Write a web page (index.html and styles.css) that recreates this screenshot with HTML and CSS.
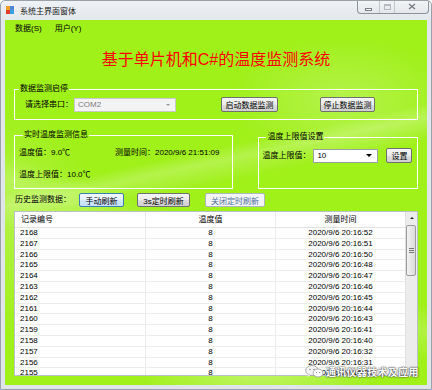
FILE: index.html
```html
<!DOCTYPE html>
<html lang="zh-CN">
<head>
    <meta charset="UTF-8">
    <title>系统主界面窗体</title>
    <link rel="stylesheet" href="styles.css">
</head>
<body>
<div class="window">
    <div class="titlebar">
        <span class="app-icon"><i class="c1"></i><i class="c2"></i><i class="c3"></i><i class="c4"></i></span>
        <span class="title">系统主界面窗体</span>
        <div class="controls">
            <span class="ctl ctl-min"><i></i></span>
            <span class="ctl ctl-max"><i></i></span>
            <span class="ctl ctl-close">
                <svg width="8" height="7" viewBox="0 0 8 7"><path d="M1 1L7 6M7 1L1 6" stroke="#7a7f86" stroke-width="1.4" fill="none"/></svg>
            </span>
        </div>
    </div>

    <div class="client">
        <div class="menu">
            <span>数据(S)</span>
            <span>用户(Y)</span>
        </div>

        <h1 class="headline">基于单片机和C#的温度监测系统</h1>

        <fieldset class="group g-start">
            <legend>数据监测启停</legend>
            <div class="row">
                <span class="lbl lbl-port">请选择串口：</span>
                <div class="combo combo-port disabled"><span>COM2</span><i class="arrow"></i></div>
                <button class="btn b-start">启动数据监测</button>
                <button class="btn b-stop">停止数据监测</button>
            </div>
        </fieldset>

        <div class="groups">
            <fieldset class="group g-live">
                <legend>实时温度监测信息</legend>
                <div class="line">
                    <span class="cur">温度值：9.0℃</span>
                    <span>测量时间：2020/9/6 21:51:09</span>
                </div>
                <div class="line">
                    <span>温度上限值：10.0℃</span>
                </div>
            </fieldset>

            <fieldset class="group g-limit">
                <legend>温度上限值设置</legend>
                <div class="row">
                    <span class="lbl lbl-limit">温度上限值：</span>
                    <div class="combo combo-limit"><span>10</span><i class="arrow"></i></div>
                    <button class="btn b-set">设置</button>
                </div>
            </fieldset>
        </div>

        <div class="history-bar">
            <span class="lbl lbl-hist">历史监测数据：</span>
            <button class="btn b-manual focus">手动刷新</button>
            <button class="btn b-timer">3s定时刷新</button>
            <button class="btn b-off" disabled>关闭定时刷新</button>
        </div>

        <div class="grid">
            <div class="grid-body">
                <div class="grid-head">
                    <span class="c-id">记录编号</span>
                    <span class="c-val">温度值</span>
                    <span class="c-time">测量时间</span>
                </div>
                <div class="grid-row"><span class="c-id">2168</span><span class="c-val">8</span><span class="c-time">2020/9/6 20:16:52</span></div>
                <div class="grid-row"><span class="c-id">2167</span><span class="c-val">8</span><span class="c-time">2020/9/6 20:16:51</span></div>
                <div class="grid-row"><span class="c-id">2166</span><span class="c-val">8</span><span class="c-time">2020/9/6 20:16:50</span></div>
                <div class="grid-row"><span class="c-id">2165</span><span class="c-val">8</span><span class="c-time">2020/9/6 20:16:48</span></div>
                <div class="grid-row"><span class="c-id">2164</span><span class="c-val">8</span><span class="c-time">2020/9/6 20:16:47</span></div>
                <div class="grid-row"><span class="c-id">2163</span><span class="c-val">8</span><span class="c-time">2020/9/6 20:16:46</span></div>
                <div class="grid-row"><span class="c-id">2162</span><span class="c-val">8</span><span class="c-time">2020/9/6 20:16:45</span></div>
                <div class="grid-row"><span class="c-id">2161</span><span class="c-val">8</span><span class="c-time">2020/9/6 20:16:44</span></div>
                <div class="grid-row"><span class="c-id">2160</span><span class="c-val">8</span><span class="c-time">2020/9/6 20:16:43</span></div>
                <div class="grid-row"><span class="c-id">2159</span><span class="c-val">8</span><span class="c-time">2020/9/6 20:16:41</span></div>
                <div class="grid-row"><span class="c-id">2158</span><span class="c-val">8</span><span class="c-time">2020/9/6 20:16:40</span></div>
                <div class="grid-row"><span class="c-id">2157</span><span class="c-val">8</span><span class="c-time">2020/9/6 20:16:32</span></div>
                <div class="grid-row"><span class="c-id">2156</span><span class="c-val">8</span><span class="c-time">2020/9/6 20:16:31</span></div>
                <div class="grid-row"><span class="c-id">2155</span><span class="c-val">8</span><span class="c-time">2020/9/6 20:16:30</span></div>
            </div>
            <div class="vscroll">
                <div class="sb-up"><i></i></div>
                <div class="sb-thumb"><i></i><i></i><i></i></div>
            </div>
        </div>
    </div>

    <div class="watermark">
        <svg width="19" height="13" viewBox="0 0 19 13">
            <ellipse cx="7" cy="5.5" rx="6.3" ry="5" fill="#f4f4f4" stroke="#9a9a9a" stroke-width="0.8"/>
            <path d="M3 9.5L2.4 12L5.2 10.3Z" fill="#f4f4f4"/>
            <ellipse cx="13" cy="8" rx="5" ry="4" fill="#ffffff" stroke="#9a9a9a" stroke-width="0.8"/>
            <circle cx="5" cy="4.5" r="0.8" fill="#8a8a8a"/>
            <circle cx="9" cy="4.5" r="0.8" fill="#8a8a8a"/>
            <circle cx="11.4" cy="7.5" r="0.6" fill="#8a8a8a"/>
            <circle cx="14.6" cy="7.5" r="0.6" fill="#8a8a8a"/>
        </svg>
        <span>通讯仪器技术及应用</span>
    </div>
</div>
</body>
</html>
```

FILE: styles.css
```css
* {
    box-sizing: border-box;
}
body {
    margin: 0;
    font-family: "Liberation Sans", "Noto Sans CJK SC", sans-serif;
    font-size: 8px;
    color: #000;
}
.window {
    position: relative;
    width: 432px;
    height: 390px;
    background: linear-gradient(to bottom, #eef2f6, #e2e7ec 20px, #dfe4e9);
    border: 1px solid #9aa1a8;
    border-radius: 5px 5px 0 0;
    overflow: hidden;
}

/* title bar */
.titlebar {
    display: flex;
    align-items: center;
    height: 19px;
    padding-left: 5px;
}
.app-icon {
    display: grid;
    grid-template-columns: 4px 4px;
    grid-template-rows: 4px 4px;
    width: 8px;
    height: 8px;
    margin-top: -1px;
}
.app-icon .c1 { background: #f0a020; }
.app-icon .c2 { background: #4f86d8; }
.app-icon .c3 { background: #e03a2a; }
.app-icon .c4 { background: #3aa0e0; }
.title {
    margin-left: 6px;
    margin-top: -1px;
    font-size: 8px;
    color: #1a1a1a;
}
.controls {
    display: flex;
    align-self: flex-start;
    margin-left: auto;
    margin-right: 2px;
    margin-top: -1px;
    height: 14px;
    border: 1px solid #8c939a;
    border-top: none;
    border-radius: 0 0 4px 4px;
    background: linear-gradient(to bottom, #f4f6f8, #e3e7eb);
}
.ctl {
    display: flex;
    align-items: center;
    justify-content: center;
    height: 100%;
}
.ctl-min {
    width: 22px;
    border-right: 1px solid #c3c8cd;
}
.ctl-min i {
    width: 7px;
    height: 3px;
    margin-top: 5px;
    border: 1px solid #7a7f86;
    background: #fff;
}
.ctl-max {
    width: 15px;
    border-right: 1px solid #c3c8cd;
}
.ctl-max i {
    width: 7px;
    height: 6px;
    border: 1px solid #b6bbc0;
    border-top-width: 2px;
}
.ctl-close {
    width: 33px;
}

/* client area */
.client {
    position: relative;
    height: 365px;
    margin: 0 4px;
    background:
        linear-gradient(168deg, transparent 38%, rgba(255,255,255,0.22) 41%, transparent 46%),
        linear-gradient(200deg, transparent 55%, rgba(255,255,255,0.18) 60%, transparent 66%),
        radial-gradient(ellipse 160px 90px at 80% 22%, rgba(255,255,255,0.22), transparent 70%),
        radial-gradient(ellipse 180px 60px at 60% 96%, rgba(255,255,255,0.35), transparent 70%),
        radial-gradient(ellipse 120px 160px at 2% 55%, rgba(255,255,255,0.18), transparent 70%),
        #a0f01a;
    overflow: hidden;
}
.menu {
    display: flex;
    height: 18px;
    line-height: 18px;
    padding-left: 10px;
}
.menu span {
    margin-right: 13px;
}
.headline {
    margin: 12px 0 0;
    height: 20px;
    line-height: 20px;
    text-align: center;
    font-size: 16px;
    font-weight: normal;
    color: #ff0000;
}

/* group boxes */
.group {
    margin: 0;
    min-width: 0;
    border: 1px solid #fff;
}
.group legend {
    margin-left: 4px;
    padding: 0 1px;
    font-size: 8px;
    line-height: 12px;
}
.g-start {
    margin: 13px 9px 0;
    padding: 2px 0 7px;
}
.row {
    display: flex;
    align-items: center;
    height: 15px;
}
.g-start .row {
    padding-left: 10px;
}
.lbl {
    line-height: 12px;
    white-space: nowrap;
}
.lbl-port { width: 49px; }
.lbl-limit { width: 51px; }
.lbl-hist { width: 64px; }

.combo {
    display: flex;
    align-items: center;
    height: 14px;
    padding-left: 3px;
    background: #fff;
    border: 1px solid #9aa0a6;
    font-size: 8px;
}
.combo span {
    flex: 1;
}
.combo .arrow {
    width: 0;
    height: 0;
    margin-right: 5px;
    border-left: 3px solid transparent;
    border-right: 3px solid transparent;
    border-top: 3px solid #000;
}
.combo.disabled {
    background: #f3f3f3;
    border-color: #c9c9c9;
    color: #7a7a7a;
}
.combo.disabled .arrow {
    border-left-width: 2px;
    border-right-width: 2px;
    border-top: 2px solid #9a9a9a;
}
.combo-port { width: 102px; }
.combo-limit { width: 65px; }

.btn {
    height: 15px;
    padding: 0;
    font-family: inherit;
    font-size: 8px;
    color: #000;
    border: 1px solid #707070;
    border-radius: 2px;
    background: linear-gradient(to bottom, #f4f4f4 0%, #ebebeb 50%, #dddddd 51%, #cfcfcf 100%);
    white-space: nowrap;
}
.b-start { width: 57px; margin-left: 45px; }
.b-stop { width: 55px; margin-left: 42px; }
.b-set { width: 26px; margin-left: 8px; }

.groups {
    display: flex;
    align-items: flex-start;
    margin: 9px 9px 0;
}
.g-live {
    width: 220px;
    padding: 6px 0 7px 4px;
}
.line {
    display: flex;
    height: 12px;
    line-height: 12px;
    white-space: nowrap;
}
.line + .line {
    margin-top: 10px;
}
.line .cur {
    width: 96px;
}
.g-limit {
    width: 160px;
    margin-left: 25px;
    margin-top: 2px;
    padding: 5px 0 25px 3px;
}

/* history */
.history-bar {
    display: flex;
    align-items: center;
    height: 14px;
    margin-top: 4px;
    padding-left: 10px;
}
.history-bar .btn {
    height: 14px;
}
.b-manual { width: 45px; }
.b-manual.focus {
    border-color: #3c7fb1;
    background: linear-gradient(to bottom, #f2f8fd 0%, #e3f0fa 50%, #d2e7f8 51%, #c4e0f6 100%);
}
.b-timer { width: 53px; margin-left: 13px; }
.b-off {
    width: 60px;
    margin-left: 15px;
    color: #4d6f9c;
    border-color: #aeb6bd;
    background: #f4f4f4;
}

/* data grid */
.grid {
    display: flex;
    height: 165px;
    margin: 4px 9px 0;
    background: #fff;
    border: 1px solid #b9c0c6;
}
.grid-body {
    flex: 1;
    overflow: hidden;
}
.grid-head,
.grid-row {
    display: flex;
    white-space: nowrap;
}
.grid-head {
    height: 16px;
    line-height: 15px;
    border-bottom: 1px solid #e2e2e2;
}
.grid-row {
    height: 10.8px;
    line-height: 10px;
    border-bottom: 1px solid #ededed;
}
.c-id {
    width: 131px;
    padding-left: 5px;
    border-right: 1px solid #ececec;
}
.grid-head .c-id {
    padding-left: 6px;
}
.c-val {
    width: 130px;
    text-align: center;
    border-right: 1px solid #ececec;
}
.c-time {
    flex: 1;
    text-align: center;
}
.vscroll {
    width: 12px;
    background: #ececec;
    border-left: 1px solid #e0e0e0;
}
.sb-up {
    display: flex;
    align-items: center;
    justify-content: center;
    height: 12px;
}
.sb-up i {
    width: 0;
    height: 0;
    border-left: 2px solid transparent;
    border-right: 2px solid transparent;
    border-bottom: 2px solid #222;
}
.sb-thumb {
    display: flex;
    flex-direction: column;
    align-items: center;
    justify-content: center;
    gap: 1px;
    width: 10px;
    height: 51px;
    margin: 1px 0 0 0;
    border: 1px solid #9c9c9c;
    border-radius: 2px;
    background: linear-gradient(to right, #f2f2f2, #dcdcdc);
}
.sb-thumb i {
    width: 5px;
    height: 1px;
    background: #777;
}

/* watermark over the corner */
.watermark {
    position: absolute;
    left: 304px;
    top: 364px;
    display: flex;
    align-items: center;
    gap: 2px;
}
.watermark span {
    font-family: "Noto Sans CJK SC", sans-serif;
    font-size: 10px;
    font-weight: bold;
    line-height: 12px;
    color: #fff;
    letter-spacing: 0.3px;
    text-shadow: 0 0 2px #333, 0 0 1px #333;
}
```
